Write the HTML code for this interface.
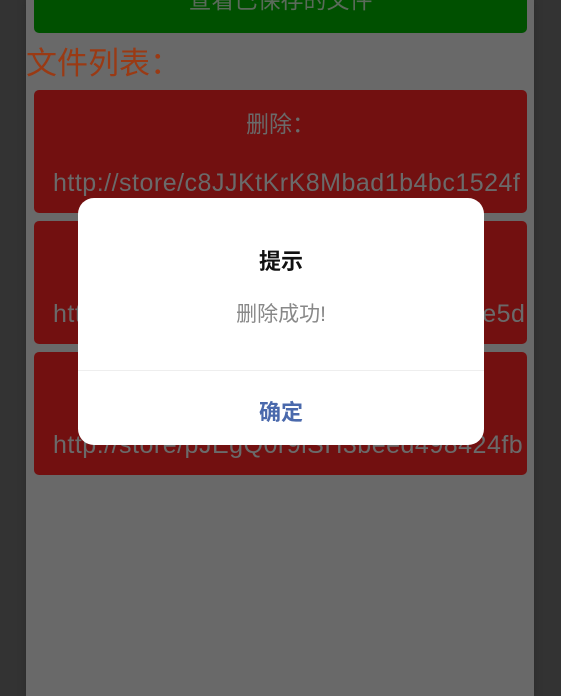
<!DOCTYPE html>
<html><head><meta charset="utf-8"><style>
*{margin:0;padding:0;box-sizing:border-box}
body{width:561px;height:696px;overflow:hidden;background:#333;font-family:"Liberation Sans","Noto Sans CJK SC",sans-serif;position:relative}
.main{position:absolute;left:26px;top:0;width:508px;height:696px;background:#696969;box-shadow:0 0 6px #2a2a2a}
.green{position:absolute;left:8px;top:-20px;width:493px;height:53px;background:#005000;border-radius:5px;color:#5a6a5a;font-size:23px;text-align:center;line-height:40px}
.hdr{position:absolute;left:0;top:44px;font-size:31px;color:#9a3a14;line-height:40px}
.card{position:absolute;left:8px;width:493px;height:123px;background:#721010;border-radius:5px;overflow:hidden;color:#6a6a6a;font-size:23px}
.card .t{position:absolute;top:19px;width:100%;text-align:center;line-height:30px}
.card .u{position:absolute;left:19px;white-space:nowrap;line-height:30px;font-size:25px;letter-spacing:0.5px}
.dlg{position:absolute;left:78px;top:198px;width:406px;height:247px;background:#fff;border-radius:16px;text-align:center}
.dlg .h{position:absolute;top:46px;width:100%;font-size:22px;font-weight:bold;color:#111}
.dlg .m{position:absolute;top:100px;width:100%;font-size:21px;color:#888}
.dlg .l{position:absolute;top:172px;left:0;width:100%;height:1px;background:#eee}
.dlg .b{position:absolute;top:197px;width:100%;font-size:22px;font-weight:bold;color:#4a69ac}
</style></head><body>
<div class="main">
<div class="green">查看已保存的文件</div>
<div class="hdr">文件列表：</div>
<div class="card" style="top:90px"><div class="t">删除：</div><div class="u" style="top:78px">http://store/c8JJKtKrK8Mbad1b4bc1524f</div></div>
<div class="card" style="top:221px"><div class="t">删除：</div><div class="u" style="top:78px">http://store/kQ2mXo8dFw3Tc0a9f71be5d</div></div>
<div class="card" style="top:352px"><div class="t">删除：</div><div class="u" style="top:78px">http://store/pJEgQ0r9lSH3beed498424fb</div></div>
</div>
<div class="dlg"><div class="h">提示</div><div class="m">删除成功!</div><div class="l"></div><div class="b">确定</div></div>
</body></html>
